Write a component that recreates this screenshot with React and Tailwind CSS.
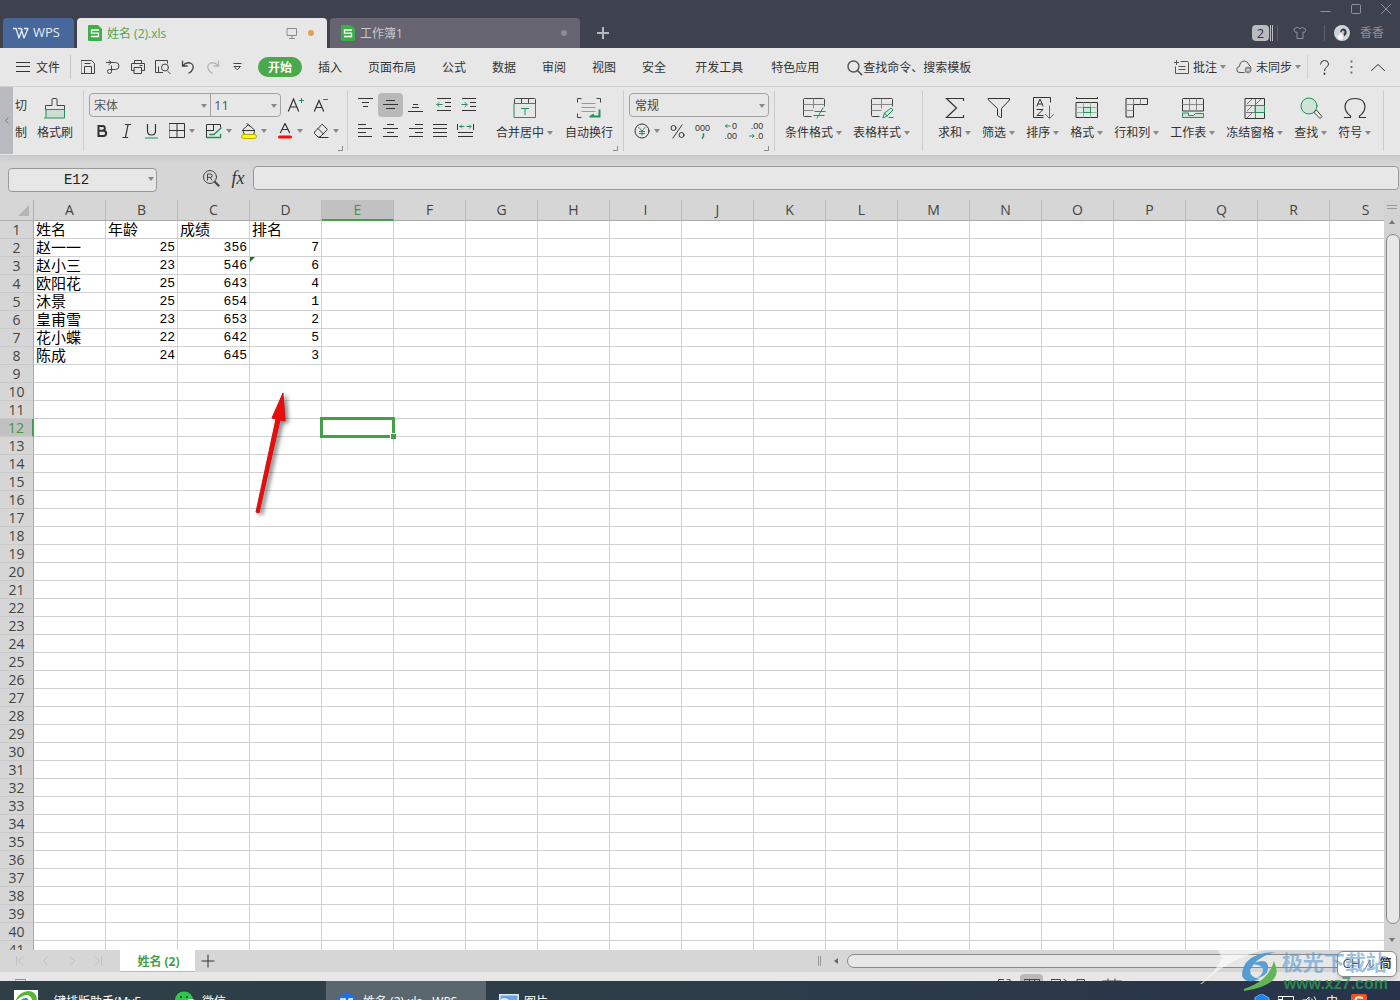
import { useState } from "react"

const columns = "ABCDEFGHIJKLMNOPQRS".split("")

const sheet = [
  ["姓名", "年龄", "成绩", "排名"],
  ["赵一一", 25, 356, 7],
  ["赵小三", 23, 546, 6],
  ["欧阳花", 25, 643, 4],
  ["沐景", 25, 654, 1],
  ["皇甫雪", 23, 653, 2],
  ["花小蝶", 22, 642, 5],
  ["陈成", 24, 645, 3],
]

const menuItems = ["插入", "页面布局", "公式", "数据", "审阅", "视图", "安全"]

const Svg = ({ w = 16, h = 16, className = "", children }) => (
  <svg
    width={w}
    height={h}
    viewBox={`0 0 ${w} ${h}`}
    fill="none"
    stroke="currentColor"
    strokeLinecap="square"
    className={`shrink-0 ${className}`}
    aria-hidden="true"
  >
    {children}
  </svg>
)

const GREEN = "#21935a"

const Caret = () => (
  <svg width="6" height="4" viewBox="0 0 6 4" className="shrink-0 text-[#888]" aria-hidden="true">
    <path d="M0 0h6L3 4z" fill="currentColor" />
  </svg>
)

const Separator = () => <div className="w-px self-stretch my-1 bg-[#cbcbcb] shrink-0" />

const Corner = ({ className = "right-1" }) => (
  <Svg w={5} h={5} className={`absolute bottom-1 ${className}`}>
    <path d="M4.500 0v4.500H0" stroke="#888" strokeLinecap="butt" />
  </Svg>
)

const IconButton = ({ label, active, children }) => (
  <button
    aria-label={label}
    className={`w-[25px] h-6 flex items-center justify-center rounded-sm ${active ? "bg-[#b9b9b9]" : ""}`}
  >
    {children}
  </button>
)

const DropIcon = ({ label, children }) => (
  <button aria-label={label} className="w-9 h-6 flex items-center justify-center gap-1">
    {children}
    <Caret />
  </button>
)

const BigButton = ({ label, drop = true, children }) => (
  <button className="flex flex-col items-center pt-[9px] shrink-0 whitespace-nowrap">
    <span className="h-6 flex items-center">{children}</span>
    <span className="mt-[5px] h-4 leading-4 flex items-center gap-[3px]">
      {label}
      {drop && <Caret />}
    </span>
  </button>
)

const SheetIcon = () => (
  <svg width="14" height="16" viewBox="0 0 14 16" className="shrink-0" aria-hidden="true">
    <path d="M1 0h9l4 4v11a1 1 0 0 1-1 1H1a1 1 0 0 1-1-1V1a1 1 0 0 1 1-1z" fill="#3fae49" />
    <path d="M11 5H3.500v3.200h7v3.300H3" fill="none" stroke="#fff" strokeWidth="1.300" />
  </svg>
)

const TitleBar = () => (
  <header className="h-12 shrink-0 bg-[#3e424f] flex items-end pl-[3px] text-xs">
    <button className="w-[71px] h-[30px] bg-[#48689b] rounded-t flex items-center gap-1 pl-[10px] text-[#e6ebf4] text-[13px]">
      <Svg w={16} h={13}>
        <path d="M.5 1.500H3l3 9.500L9 2.500M5.500 1.500H8l3 9.500 4-9.500h-3.500" strokeWidth="1.300" strokeLinejoin="round" />
      </Svg>
      WPS
    </button>
    <div className="ml-[3px] w-[250px] h-[30px] bg-[#e7e7e7] rounded-t flex items-center pl-[11px] pr-[13px] text-[#4da64f]">
      <SheetIcon />
      <span className="ml-[5px] pt-[2px]">姓名 (2).xls</span>
      <Svg w={12} h={12} className="ml-auto text-[#8c8c8c]">
        <path d="M1.500 1.500h9v7h-9zM6 9v2M3.500 11.500h5" />
      </Svg>
      <span className="ml-[10px] size-[6px] rounded-full bg-[#e2a052]" />
    </div>
    <div className="ml-[3px] w-[250px] h-[30px] bg-[#656470] rounded-t flex items-center pl-[11px] pr-[13px] text-[#c9c9cf]">
      <SheetIcon />
      <span className="ml-[5px] pt-[2px]">工作簿1</span>
      <span className="ml-auto size-[6px] rounded-full bg-[#8d8c97]" />
    </div>
    <button aria-label="新建标签" className="ml-[17px] mb-[9px]">
      <Svg w={12} h={12} className="text-[#b5b7bd]">
        <path d="M6 1v10M1 6h10" strokeWidth="2" />
      </Svg>
    </button>
    <div className="ml-auto self-stretch flex flex-col items-end text-[#8e9098]">
      <div className="h-[18px] flex items-center gap-[18px] pr-2">
        <button aria-label="最小化">
          <Svg w={12} h={12}><path d="M1 8.500h9" /></Svg>
        </button>
        <button aria-label="最大化">
          <Svg w={12} h={12}><rect x="1.500" y="1.500" width="9" height="9" rx="1" /></Svg>
        </button>
        <button aria-label="关闭">
          <Svg w={12} h={12}><path d="M1.500 1.500l9 9M10.500 1.500l-9 9" /></Svg>
        </button>
      </div>
      <div className="flex-1 flex items-center pr-4">
        <span className="w-[17px] h-4 leading-4 text-center bg-[#b9bbc1] text-[#33363f] rounded-sm text-[13px]">2</span>
        <Svg w={5} h={16}><path d="M1.500 0v16M3.500 0v16" stroke="#b9bbc1" /></Svg>
        <span className="ml-[3px] w-px h-4 bg-[#5d606c]" />
        <Svg w={14} h={14} className="ml-[15px]">
          <path d="M4.500 1.500q2.500 2.500 5 0l3.500 2-1.500 3-1.500-.5v6.500h-6V6l-1.500.5-1.500-3z" strokeLinejoin="round" />
        </Svg>
        <span className="ml-[17px] w-px h-4 bg-[#5d606c]" />
        <svg width="16" height="16" viewBox="0 0 16 16" className="ml-[9px]" aria-hidden="true">
          <circle cx="8" cy="8" r="8" fill="#cfd4da" />
          <path d="M6 7q1-4 4-3.500 3 1 2.500 5l-2 3-1.500-4z" fill="#3b3640" />
          <circle cx="9" cy="7" r="1.500" fill="#e3b8a4" />
          <path d="M3 11l5-3 1 6-4 1z" fill="#f4f5f7" />
        </svg>
        <span className="ml-[10px]">香香</span>
      </div>
    </div>
  </header>
)

const MenuBar = () => (
  <nav className="h-[39px] shrink-0 bg-[#e7e7e7] border-b border-[#d0d0d0] flex items-center text-xs text-[#333] whitespace-nowrap">
    <button className="ml-4 flex items-center gap-[6px]">
      <Svg w={14} h={10}><path d="M.5 .5h13M.5 4.500h13M.5 9.500h13" /></Svg>
      <span className="pt-[2px]">文件</span>
    </button>
    <div className="ml-[10px] w-px h-6 bg-[#c4c4c4]" />
    <div className="ml-1 flex text-[#444]">
      <IconButton label="保存">
        <Svg w={14} h={14}><path d="M.5.5h10l3 3v10H.5zM3.500 13V6.500h7V13M4 3.500h5" strokeLinejoin="round" /></Svg>
      </IconButton>
      <IconButton label="输出">
        <Svg w={14} h={14}><path d="M.5 2.500h9a3.500 3.500 0 0 1 0 7h-4M3 .5l2.500 2L3 4.500M5.500 6v5.500a2 2 0 1 1-2-2h2" /></Svg>
      </IconButton>
      <IconButton label="打印">
        <Svg w={14} h={14}><path d="M3.500 3.500v-3h7v3M3 10.500H.5v-7h13v7H11M3.500 7.500h7v6h-7zM9 5.500h2" strokeLinejoin="round" /></Svg>
      </IconButton>
      <IconButton label="打印预览">
        <Svg w={16} h={14}><path d="M12.500 3V.5H.5v12h7M13 11.500l2 2M3.500 12V7" /><circle cx="10" cy="7.500" r="3.500" /></Svg>
      </IconButton>
      <IconButton label="撤销">
        <Svg w={14} h={14}><path d="M1.500 1.500v4.500h4.500M2 5.500q3-3.500 7-2.500 4 1.500 3 5.500-1 3-4 4.500" strokeWidth="1.300" /></Svg>
      </IconButton>
      <IconButton label="重做">
        <Svg w={14} h={14} className="text-[#b5b5b5]"><path d="M12.500 1.500v4.500H8M12 5.500q-3-3.500-7-2.500-4 1.500-3 5.500 1 3 4 4.500" strokeWidth="1.300" /></Svg>
      </IconButton>
      <IconButton label="更多">
        <Svg w={9} h={8}><path d="M1 .5h7M1.500 3.500h6l-3 3z" /></Svg>
      </IconButton>
    </div>
    <button className="ml-2 w-11 h-5 pt-px rounded-full bg-[#4aa84d] text-white font-bold">开始</button>
    <div className="ml-4 pt-[2px] flex gap-[26px]">
      {menuItems.map((item) => (
        <button key={item}>{item}</button>
      ))}
    </div>
    <div className="ml-[29px] pt-[2px] flex gap-7">
      <button>开发工具</button>
      <button>特色应用</button>
      <button className="flex items-center">
        <Svg w={16} h={16} className="text-[#555]"><circle cx="6.500" cy="6.500" r="5.500" strokeWidth="1.400" /><path d="M10.500 10.500l4 4" strokeWidth="1.600" /></Svg>
        查找命令、搜索模板
      </button>
    </div>
    <div className="ml-auto flex items-center pr-[14px]">
      <button className="flex items-center">
        <Svg w={16} h={14} className="mr-[3px]"><path d="M7 1.500h6.500q1 0 1 1v11H1.500V7M2.500.5v4M.5 2.500h4M5 6.500h6M5 9.500h6" stroke="#555" /></Svg>
        <span className="pt-[2px]">批注</span>
        <span className="ml-[3px]"><Caret /></span>
      </button>
      <button className="ml-[10px] flex items-center">
        <Svg w={16} h={14} className="mr-[4px]">
          <path d="M8 12.500H4a3 3 0 0 1-.5-6Q4 1 8.500 1 12 1.500 13 5q2 1 2 3" stroke="#555" />
          <circle cx="12" cy="10" r="3" fill="#999" stroke="#888" />
          <path d="M11 10h2" stroke="#fff" />
        </Svg>
        <span className="pt-[2px]">未同步</span>
        <span className="ml-[3px]"><Caret /></span>
      </button>
      <div className="ml-[6px] w-px h-6 bg-[#cfcfcf]" />
      <button aria-label="帮助" className="ml-[11px]">
        <Svg w={11} h={15}><path d="M1.500 4q0-3.500 4-3.500t4 3.500q0 2-2 3.200-2 1-2 3.300" /><path d="M5.500 13.500v.5" strokeWidth="1.600" /></Svg>
      </button>
      <button aria-label="更多选项" className="ml-[20px]">
        <Svg w={3} h={14} className="text-[#666]"><path d="M1.500 1.500v.1M1.500 7v.1M1.500 12.500v.1" strokeWidth="1.800" /></Svg>
      </button>
      <button aria-label="折叠功能区" className="ml-[17px]">
        <Svg w={16} h={9}><path d="M1.500 7.500 8 1.500l6.500 6" /></Svg>
      </button>
    </div>
  </nav>
)

const AlignLines = ({ d }) => (
  <Svg w={15} h={14}>
    <path d={d} stroke="#333" strokeLinecap="butt" />
  </Svg>
)

const FontGroup = () => (
  <div className="relative pl-[5px] pr-[3px] pt-[6px] flex flex-col gap-[2px] shrink-0">
    <div className="flex">
      <div className="w-[192px] h-6 border border-[#a3a3a3] rounded flex">
        <div className="relative w-[121px] border-r border-[#a3a3a3] flex items-center">
          <select aria-label="字体" className="appearance-none w-full pl-1 pt-px text-[#555] outline-none">
            <option>宋体</option>
          </select>
          <span className="absolute right-[3px] top-[10px] pointer-events-none"><Caret /></span>
        </div>
        <div className="relative flex-1 flex items-center">
          <select aria-label="字号" className="appearance-none w-full pl-[3px] pt-px text-[13px] text-[#555] outline-none">
            <option>11</option>
          </select>
          <span className="absolute right-[3px] top-[10px] pointer-events-none"><Caret /></span>
        </div>
      </div>
      <div className="ml-[2px] flex">
        <IconButton label="增大字号">
          <Svg w={17} h={16}><path d="M1.500 14 6.500 2l5 12M3.500 10h6" strokeWidth="1.200" /><path d="M14.500 1v5M12 3.500h5" stroke={GREEN} strokeLinecap="butt" /></Svg>
        </IconButton>
        <IconButton label="减小字号">
          <Svg w={17} h={16}><path d="M2.500 14 7 3.500l4.500 10.500M4 10.500h6" strokeWidth="1.200" /><path d="M11 2.500h5" stroke={GREEN} strokeLinecap="butt" /></Svg>
        </IconButton>
      </div>
    </div>
    <div className="flex">
      <IconButton label="加粗">
        <Svg w={12} h={14}><path d="M2.500 2h4a2.300 2.300 0 0 1 0 4.700h-4zM2.500 6.700h5a2.600 2.600 0 0 1 0 5.300h-5z" strokeWidth="2" /></Svg>
      </IconButton>
      <IconButton label="倾斜">
        <Svg w={10} h={15}><path d="M3.500.5h5M1 13.500h4.500M6 1 3.500 13" strokeWidth="1.200" /></Svg>
      </IconButton>
      <IconButton label="下划线">
        <Svg w={13} h={15}><path d="M2.500.5v6.500q0 4 4 4t4-4V.5" strokeWidth="1.200" /><path d="M.5 14h12" stroke={GREEN} /></Svg>
      </IconButton>
      <DropIcon label="边框">
        <Svg><path d="M.5.5h15v14H.5zM8 .5v14M.5 7.500h15" /></Svg>
      </DropIcon>
      <DropIcon label="绘图边框">
        <Svg w={17} h={16}><path d="M15.500 4V1.500h-14V14M8.500 1.500v6M1.500 7.500h6" /><path d="M1.500 14.500h14v-3M5 11.500h4l7-6.500" stroke={GREEN} strokeWidth="1.400" /></Svg>
      </DropIcon>
      <DropIcon label="填充颜色">
        <Svg><path d="M3 10.500 1.500 7l6-5.500 6 5.500-.5 3.500M6 .5l3 3M2 7.500h11" /><rect x=".5" y="11.500" width="15" height="4" rx="2" fill="#ff0" stroke="#b5a800" /></Svg>
      </DropIcon>
      <DropIcon label="字体颜色">
        <Svg><path d="M3.500 9.500 8 .5l4.500 9M5 6.500h6" strokeWidth="1.200" /><path d="M2.500 14h11" stroke="#e11" strokeWidth="3" strokeLinecap="round" /></Svg>
      </DropIcon>
      <DropIcon label="清除">
        <Svg><path d="M9.500 1.500 14.500 6.500 7 14H5L1.500 10.500V9.500zM5 5.500l5.500 5.500M6 14.500h9" /></Svg>
      </DropIcon>
    </div>
    <Corner />
  </div>
)

const AlignGroup = () => (
  <div className="relative pl-[5px] pr-[10px] flex shrink-0">
    <div className="pt-[6px] flex flex-col gap-[2px] w-[128px]">
      <div className="flex">
        <IconButton label="顶端对齐"><AlignLines d="M0 .5h15M4 4.500h7M5 8.500h5" /></IconButton>
        <IconButton label="垂直居中" active><AlignLines d="M3 2.500h9M0 6.500h15M3 10.500h9" /></IconButton>
        <IconButton label="底端对齐"><AlignLines d="M5 6.500h5M4 9.500h7M0 13.500h15" /></IconButton>
        <div className="ml-[3px] flex">
          <IconButton label="减少缩进">
            <Svg w={15} h={14}><path d="M1 .5h14M9 4.500h6M9 8.500h6M1 12.500h14" stroke="#333" strokeLinecap="butt" /><path d="M1 6.500h5M3 4.500l-2 2 2 2" stroke={GREEN} /></Svg>
          </IconButton>
          <IconButton label="增加缩进">
            <Svg w={15} h={14}><path d="M1 .5h14M9 4.500h6M9 8.500h6M1 12.500h14" stroke="#333" strokeLinecap="butt" /><path d="M1 6.500h5M4 4.500l2 2-2 2" stroke={GREEN} /></Svg>
          </IconButton>
        </div>
      </div>
      <div className="flex">
        <IconButton label="左对齐"><AlignLines d="M0 .5h8M0 4.500h14M0 8.500h8M0 12.500h14" /></IconButton>
        <IconButton label="居中"><AlignLines d="M4 .5h7M0 4.500h15M4 8.500h7M0 12.500h15" /></IconButton>
        <IconButton label="右对齐"><AlignLines d="M7 .5h8M1 4.500h14M7 8.500h8M1 12.500h14" /></IconButton>
        <IconButton label="两端对齐"><AlignLines d="M0 .5h14M0 4.500h14M0 8.500h14M0 12.500h14" /></IconButton>
        <IconButton label="分散对齐">
          <Svg w={17} h={14}><path d="M.5 0v6M16.500 0v6M1 8.500h15M1 12.500h15" stroke="#333" strokeLinecap="butt" /><path d="M3 2.500h4M10 2.500h4M4.500 1l-1.500 1.500 1.500 1.500M12.500 1l1.500 1.500-1.500 1.500" stroke={GREEN} /></Svg>
        </IconButton>
      </div>
    </div>
    <div className="ml-[15px] flex gap-3">
      <BigButton label="合并居中">
        <Svg w={24} h={22}><path d="M1.500 6.500v-4q0-1 1-1h19q1 0 1 1v4M8.500 1.500v5M15.500 1.500v5" stroke="#444" /><path d="M1.500 6.500h21v14h-21zM8.500 11.500h7M12 11.500v6" stroke={GREEN} /></Svg>
      </BigButton>
      <BigButton label="自动换行" drop={false}>
        <Svg w={26} h={22}>
          <path d="M1.500 5V1.500H5M21 1.500h3.500V5M1.500 17v3.500H5" stroke="#444" />
          <path d="M6 6.500h13M6 10.500h13M6 14.500h13" stroke="#999" />
          <path d="M23.500 13.500v6H16M17 18l-2.500 1.500" stroke={GREEN} strokeWidth="2" />
        </Svg>
      </BigButton>
    </div>
    <Corner className="right-[5px]" />
  </div>
)

const NumberGroup = () => (
  <div className="relative pl-[5px] pr-[5px] pt-[6px] flex flex-col gap-[2px] shrink-0">
    <div className="relative w-[140px] h-6 border border-[#a3a3a3] rounded flex items-center">
      <select aria-label="数字格式" className="appearance-none w-full pl-[5px] pt-px text-[#444] outline-none">
        <option>常规</option>
      </select>
      <span className="absolute right-[3px] top-[10px] pointer-events-none"><Caret /></span>
    </div>
    <div className="flex font-['Liberation_Sans',sans-serif]">
      <DropIcon label="货币">
        <Svg><circle cx="8" cy="8" r="7" /><path d="M5 4.500 8 8l3-3.500M8 8v4M5.500 8.500h5M5.500 10.500h5" stroke={GREEN} /></Svg>
      </DropIcon>
      <IconButton label="百分比">
        <Svg w={15} h={15}><circle cx="3.500" cy="4" r="2.500" /><circle cx="11.500" cy="11" r="2.500" /><path d="M12 1 3 14" /></Svg>
      </IconButton>
      <IconButton label="千位分隔">
        <span className="flex flex-col items-center text-[9px] leading-[10px]">
          000
          <Svg w={4} h={6}><path d="M2.500 1v2l-1 2" stroke={GREEN} strokeWidth="1.600" /></Svg>
        </span>
      </IconButton>
      <div className="ml-[3px] flex">
        <IconButton label="增加小数位">
          <span className="flex flex-col items-end text-[9px] leading-[10px]">
            <span className="flex items-center"><Svg w={8} h={6}><path d="M1.500 3H6M3 1.500 1.500 3 3 4.500" stroke={GREEN} /></Svg>0</span>
            <span>.00</span>
          </span>
        </IconButton>
        <IconButton label="减少小数位">
          <span className="flex flex-col items-end text-[9px] leading-[10px]">
            <span>.00</span>
            <span className="flex items-center"><Svg w={8} h={6}><path d="M1.500 3H6M4.500 1.500 6 3 4.500 4.500" stroke={GREEN} /></Svg>.0</span>
          </span>
        </IconButton>
      </div>
    </div>
    <Corner className="right-[5px]" />
  </div>
)

const Ribbon = () => (
  <div className="h-[69px] shrink-0 bg-[#e7e7e7] border-b border-[#c6c6c6] flex text-xs text-[#333] overflow-hidden">
    <button aria-label="向左滚动" className="w-[13px] bg-[#b9bac0] mb-px flex items-center justify-center shrink-0">
      <Svg w={5} h={7}><path d="M4 1 1.500 3.500 4 6" stroke="#777" /></Svg>
    </button>
    <div className="flex pl-[2px] pr-[10px] shrink-0">
      <div className="flex flex-col pt-[11px] gap-[11px]">
        <button className="leading-4">切</button>
        <button className="leading-4">制</button>
      </div>
      <div className="ml-[10px] flex">
        <BigButton label="格式刷" drop={false}>
          <Svg w={22} h={22}>
            <rect x="1.500" y="13" width="19" height="8" fill="#cfdcd4" stroke="none" />
            <path d="M1.500 12.500v-4h6.500V2.500q0-1 1-1h3q1 0 1 1v6h7.500v4" stroke="#444" />
            <path d="M1.500 12.500h19v8.500H.5M2 13v7" stroke={GREEN} />
          </Svg>
        </BigButton>
      </div>
    </div>
    <Separator />
    <FontGroup />
    <Separator />
    <AlignGroup />
    <Separator />
    <NumberGroup />
    <Separator />
    <div className="flex gap-[11px] pl-[10px] pr-3 shrink-0">
      <BigButton label="条件格式">
        <Svg w={24} h={22}><path d="M9 19.500H2.500q-1 0-1-1v-16q0-1 1-1h19q1 0 1 1V9" stroke="#444" /><path d="M2 7.500h20M2 13.500h9M11.500 2v9" stroke="#888" /><path d="M13 14.500h10M12 18.500h10M21 11l-6 10" stroke={GREEN} /></Svg>
      </BigButton>
      <BigButton label="表格样式">
        <Svg w={24} h={22}><path d="M9 19.500H2.500q-1 0-1-1v-16q0-1 1-1h19q1 0 1 1V9" stroke="#444" /><path d="M2 7.500h20M2 13.500h9M11.500 2v9" stroke="#888" /><path d="M13 20.500l1.500-4.500 6.500-5 2 2-6 6zM14.500 16l2.500 3M19 20.500h4" fill="#d3e5da" stroke={GREEN} /></Svg>
      </BigButton>
    </div>
    <Separator />
    <div className="flex gap-[11px] pl-[15px] pr-3 shrink-0">
      <BigButton label="求和">
        <Svg w={20} h={22}><path d="M18.500 3.500v-2h-17L11.500 11l-10 9.500h17v-2" strokeWidth="1.200" /></Svg>
      </BigButton>
      <BigButton label="筛选">
        <Svg w={24} h={22}><path d="M1.500 1.500h21V3L14.500 11.500v9h-1l-3-2v-7L1.500 3z" strokeLinejoin="round" /></Svg>
      </BigButton>
      <BigButton label="排序">
        <Svg w={22} h={23}><path d="M11 20.500H1.500V.5h17V5M5 9l3-7 3 7M6 7h4M5 12.500h6l-6 6h6" /><path d="M17.500 9v12M13.500 17.500l4 4 4-4" stroke={GREEN} /></Svg>
      </BigButton>
      <BigButton label="格式">
        <Svg w={24} h={22}><path d="M1.500 0v1M22.500 0v1M1.500 1.500h21M1.500 5.500h21v15h-21z" stroke="#333" /><path d="M2 10.500h20M2 15.500h20M8.500 6v14M15.500 6v14" stroke="#8fb7a1" /><rect x="8.500" y="10.500" width="7" height="5" fill="#d3e5da" stroke={GREEN} /></Svg>
      </BigButton>
      <BigButton label="行和列">
        <Svg w={24} h={22}><path d="M1.500 1.500h21v6H8.500v12.500h-7z" stroke="#333" /><path d="M8.500 2v5M15.500 2v5M2 7.500h6M2 13.500h6" stroke="#888" /></Svg>
      </BigButton>
      <BigButton label="工作表">
        <Svg w={24} h={22}><path d="M1.500 13.500v-11q0-1 1-1h19q1 0 1 1v11z" stroke="#333" /><path d="M8.500 2v11M15.500 2v11M2 7.500h20" stroke="#888" /><path d="M1.500 16.500v4h21v-4h-8l-2 2h-5v-2z" fill="#cfe3d6" stroke={GREEN} /></Svg>
      </BigButton>
      <BigButton label="冻结窗格">
        <Svg w={22} h={23}><rect x="12" y="9" width="9" height="6" fill="#cfe3d6" stroke="none" /><path d="M1.500 1.500h19v20h-19z" stroke="#333" /><path d="M11.500 2v19M2 15.500h18M2 8.500h9M3 7l5-5M12 7l5-5M3 14l5-5M3 21l5-5" stroke="#777" strokeLinecap="butt" /><path d="M11.500 8.500h9v7h-9z" stroke={GREEN} /></Svg>
      </BigButton>
      <BigButton label="查找">
        <Svg w={24} h={22}><circle cx="10" cy="9" r="8" fill="#cfe3d6" stroke={GREEN} /><path d="M16 14l1.500-1 5.500 6.500-2 2L15.500 16z" stroke="#444" /></Svg>
      </BigButton>
      <BigButton label="符号">
        <Svg w={24} h={22}><path d="M1.500 20.500h6v-1.500Q2 15 2 9.500 2.500 1.500 12 1.500t10 8q0 5.500-5.500 9.500v1.500h6" stroke="#333" strokeWidth="1.200" /></Svg>
      </BigButton>
    </div>
    <Separator />
  </div>
)

const FormulaBar = () => (
  <div className="h-11 shrink-0 bg-[#d6d6d6] bg-linear-to-b from-[#cdcdcd] to-[#d6d6d6] to-20% flex items-center pl-2 pr-px pb-[2px] pt-px">
    <div className="relative w-[149px] h-6">
      <input
        aria-label="名称框"
        defaultValue="E12"
        className="w-full h-full bg-[#e7e7e7] border border-[#999] rounded text-center pr-3 text-sm text-[#222] font-['Liberation_Mono','Noto_Sans_CJK_SC',monospace] outline-none"
      />
      <span className="absolute right-[3px] top-[11px] pointer-events-none"><Caret /></span>
    </div>
    <button aria-label="查找公式" className="ml-[45px]">
      <Svg w={18} h={18} className="text-[#444]">
        <circle cx="8" cy="8" r="6.500" />
        <path d="M5.500 11V5h3a1.700 1.700 0 0 1 0 3.400h-3M8 8.500 10 11" />
        <path d="M13 13l3.500 3.500" strokeWidth="2" />
      </Svg>
    </button>
    <button aria-label="插入函数" className="ml-2 w-[20px] text-lg leading-5 italic text-[#333] font-['Liberation_Serif',serif]">fx</button>
    <input
      aria-label="编辑栏"
      className="ml-[5px] flex-1 min-w-0 h-6 bg-[#e7e7e7] border border-[#999] rounded px-2 text-[13px] outline-none"
    />
  </div>
)

const Grid = () => {
  const [selected, setSelected] = useState({ row: 12, col: "E" })

  return (
    <div className="relative flex-1 min-w-0 overflow-hidden bg-white">
      <table className="table-fixed w-[1402px] border-separate border-spacing-0">
        <thead>
          <tr className="bg-[#d6d6d6] text-sm text-[#444]">
            <th className="relative w-[34px] h-[21px] p-0 border-b border-r border-[#b0b0b0]">
              <Svg w={11} h={11} className="absolute right-1 bottom-1">
                <path d="M11 0v11H0z" fill="#b4b4b4" stroke="none" />
              </Svg>
            </th>
            {columns.map((col) => (
              <th
                key={col}
                className={`w-[72px] h-[21px] p-0 leading-[18px] font-normal ${
                  col === selected.col
                    ? "bg-[#c1c1c1] text-[#3c9a3f] border-b-2 border-r border-b-[#43a047] border-r-[#b8b8b8]"
                    : "border-b border-r border-b-[#a8a8a8] border-r-[#b8b8b8]"
                }`}
              >
                {col}
              </th>
            ))}
          </tr>
        </thead>
        <tbody>
          {Array.from({ length: 41 }, (_, i) => i + 1).map((row) => (
            <tr key={row}>
              <th
                className={`h-[18px] p-0 text-sm leading-[17px] font-normal border-b border-b-[#c9c9c9] ${
                  row === selected.row
                    ? "bg-[#c1c1c1] text-[#3c9a3f] border-r-2 border-r-[#43a047]"
                    : "bg-[#d6d6d6] text-[#444] border-r border-r-[#a8a8a8]"
                }`}
              >
                {row}
              </th>
              {columns.map((col, c) => {
                const value = sheet[row - 1]?.[c]
                const isNumber = typeof value === "number"
                return (
                  <td
                    key={col}
                    onClick={() => setSelected({ row, col })}
                    className={`relative h-[18px] p-0 border-r border-b border-[#d0d0d0] text-black whitespace-nowrap ${
                      isNumber
                        ? "pt-px pr-[2px] text-right text-[13px] leading-4 font-['Liberation_Mono',monospace]"
                        : "pl-[2px] text-[15px] leading-[17px]"
                    }`}
                  >
                    {value}
                    {row === 3 && col === "D" && (
                      <Svg w={5} h={5} className="absolute left-0 top-0">
                        <path d="M0 0h5L0 5z" fill="#1b7a1f" stroke="none" />
                      </Svg>
                    )}
                    {row === selected.row && col === selected.col && (
                      <div className="absolute -left-0.5 -top-0.5 -right-0.5 -bottom-0.5 border-[3px] border-[#43a047] z-10">
                        <span className="absolute -right-1 -bottom-1 size-[6px] bg-[#43a047] border-l border-t border-white" />
                      </div>
                    )}
                  </td>
                )
              })}
            </tr>
          ))}
        </tbody>
      </table>
      {/* hand-drawn pointer lying over the cells */}
      <svg width="50" height="136" viewBox="0 0 50 136" className="absolute left-[247px] top-[187px] pointer-events-none drop-shadow-[3px_2px_2px_rgba(0,0,0,0.5)]" aria-hidden="true">
        <path d="M9 125 29 32l-4-1L36 6l2 28-5-1L12 126z" fill="#ea0c0c" stroke="#d01010" />
      </svg>
    </div>
  )
}

const VerticalScroll = () => (
  <div className="w-4 shrink-0 bg-[#d2d2d2] flex flex-col items-center">
    <Svg w={10} h={12}><path d="M.5 5.500h9M.5 8.500h9" stroke="#999" /></Svg>
    <Svg w={6} h={4} className="mt-2"><path d="M0 4h6L3 0z" fill="#777" stroke="none" /></Svg>
    <div className="mt-[10px] w-[14px] flex-1 ml-[2px] rounded-full border border-[#8a8a8a] bg-[#e7e7e7]" />
    <Svg w={6} h={4} className="mt-[14px] mb-2"><path d="M0 0h6L3 4z" fill="#777" stroke="none" /></Svg>
  </div>
)

const SheetTabs = () => (
  <div className="h-[22px] shrink-0 bg-[#d6d6d6] flex items-center text-xs">
    <div className="w-[120px] flex items-center gap-4 pl-[15px] text-[#bdbdbd]">
      <button aria-label="第一个"><Svg w={10} h={10}><path d="M1.500 1v8M7.500 1l-4 4 4 4" /></Svg></button>
      <button aria-label="上一个"><Svg w={10} h={10}><path d="M6.500 1l-4 4 4 4" /></Svg></button>
      <button aria-label="下一个"><Svg w={10} h={10}><path d="M3.500 1l4 4-4 4" /></Svg></button>
      <button aria-label="最后一个"><Svg w={10} h={10}><path d="M8.500 1v8M2.500 1l4 4-4 4" /></Svg></button>
    </div>
    <button className="w-[75px] h-full pt-[2px] pl-[2px] bg-white text-[#43a047] font-bold text-center border-b border-[#bbb]">姓名 (2)</button>
    <button aria-label="新建工作表" className="ml-[6px]">
      <Svg w={14} h={14}><path d="M7 1v12M1 7h12" stroke="#333" /></Svg>
    </button>
    <div className="ml-auto w-[582px] flex items-center pr-[17px]">
      <Svg w={4} h={10}><path d="M.5 0v10M2.500 0v10" stroke="#999" /></Svg>
      <Svg w={4} h={6} className="ml-3"><path d="M4 0v6L0 3z" fill="#666" stroke="none" /></Svg>
      <div className="ml-[9px] flex-1 h-[14px] rounded-full border border-[#8a8a8a] bg-[#e7e7e7]" />
    </div>
  </div>
)

const StatusBar = () => (
  <div className="h-[9px] shrink-0 bg-[#e7e7e7] overflow-hidden flex items-start justify-between">
    <div className="pl-[15px] pt-[7px]">
      <Svg w={11} h={11} className="text-[#7c9c8c]"><path d="M.5 .5h10v10H.5zM3 3h5" /></Svg>
    </div>
    <div className="flex items-start gap-2 pr-[276px] text-[#444]">
      <Svg w={14} h={20} className="mt-[6px]"><path d="M.5 12V1.500h5" /><path d="M9 1.500h3v4M12 2 8 6" stroke={GREEN} /></Svg>
      <span className="w-[23px] h-5 mt-[2px] rounded-sm bg-[#b9b9b9] flex justify-center pt-1">
        <Svg w={16} h={14}><path d="M.5 1.500h15v12H.5zM5.500 2v11M10.500 2v11" /></Svg>
      </span>
      <Svg w={17} h={14} className="mt-[6px]"><path d="M.5 1.500h9v10h-9zM13 1.500l2 1v10" /></Svg>
      <Svg w={10} h={14} className="mt-[6px]"><path d="M1.500 1.500h7v10h-7z" /></Svg>
      <Svg w={22} h={14} className="mt-[6px] ml-2"><path d="M1 3h18M6 1v3M13 1v3" /></Svg>
    </div>
  </div>
)

const TaskBar = () => (
  <footer className="h-[19px] shrink-0 overflow-hidden bg-linear-to-r from-[#2e3f46] via-[#2d3d49] to-[#27334a] text-xs text-white whitespace-nowrap">
    <div className="h-[42px] flex items-center">
      <button className="w-[160px] h-full flex items-center pl-[14px] gap-1">
        <svg width="24" height="24" viewBox="0 0 24 24" className="shrink-0" aria-hidden="true">
          <path d="M0 0h24v24H0z" fill="#fff" />
          <path d="M1 12Q4 2 14 1q8 0 9 8l-5 10Q20 6 13 5 6 6 1 12z" fill="#5cb531" />
          <path d="M3 16Q7 7 13 8q4 3-1 14z" fill="#2c8fd6" />
        </svg>
        一键排版助手(MyE...
      </button>
      <button className="w-[166px] h-full flex items-center pl-[14px] gap-1">
        <svg width="24" height="22" viewBox="0 0 24 22" className="shrink-0" aria-hidden="true">
          <ellipse cx="10" cy="9" rx="9" ry="8.500" fill="#2dc84d" />
          <ellipse cx="17" cy="14" rx="7" ry="6" fill="#e8eee9" />
          <circle cx="7" cy="6" r="1.200" fill="#16632a" />
          <circle cx="13" cy="6" r="1.200" fill="#16632a" />
        </svg>
        微信
      </button>
      <button className="w-[160px] h-full flex items-center pl-[11px] gap-[6px] bg-[#5a676e]">
        <svg width="20" height="20" viewBox="0 0 20 20" className="shrink-0" aria-hidden="true">
          <path d="M10 0l9 5v10l-9 5-9-5V5z" fill="#1f6fe5" />
          <path d="M4 14V7h4v3H4M16 7h-4v6h4" fill="none" stroke="#fff" strokeWidth="1.500" />
        </svg>
        姓名 (2).xls - WPS...
      </button>
      <button className="h-full flex items-center pl-[13px] gap-[5px]">
        <svg width="20" height="16" viewBox="0 0 20 16" className="shrink-0" aria-hidden="true">
          <path d="M0 0h20v16H0z" fill="#dfe9f2" />
          <path d="M1.500 1.500h17v13h-17z" fill="#6aa5e8" />
          <path d="M2 5q5-3 9 2t8 0v7H2z" fill="#d8ebfa" />
        </svg>
        图片
      </button>
      <div className="ml-auto flex items-center pr-[33px]">
        <Svg w={8} h={8}><path d="M1 5.500 4 2.500l3 3" /></Svg>
        <Svg w={16} h={16} className="ml-3"><path d="M8 0l7 4v8l-7 4-7-4V4z" fill="#1684fb" stroke="#6cb4ff" /></Svg>
        <Svg w={16} h={12} className="ml-2"><path d="M.5.5h15v10H.5zM.5 3.500h3M4.500.5v5" /></Svg>
        <Svg w={16} h={14} className="ml-2"><path d="M1 5h3l3-3v10L4 9H1zM10 4q2 3 0 6M12.500 2q3 5 0 10" /></Svg>
        <span className="ml-2 w-3">中</span>
        <svg width="16" height="16" viewBox="0 0 16 16" className="ml-[13px]" aria-hidden="true">
          <path d="M2 0h12q2 0 2 2v12q0 2-2 2H2q-2 0-2-2V2q0-2 2-2z" fill="#f4511e" />
          <path d="M12 4Q5 2 4.500 5.500 5 7.500 9 8q3 1 2 3-2 2-7 1" fill="none" stroke="#fff" strokeWidth="2" />
        </svg>
      </div>
    </div>
  </footer>
)

const InputIndicator = () => (
  <div className="absolute right-[3px] bottom-[23px] w-[60px] h-[26px] bg-white rounded-md border border-[#888] shadow-md flex items-center justify-center gap-1 text-xs text-[#333]">
    <span className="text-[13px] text-[#555]">CH</span>
    <Svg w={11} h={12}><path d="M1 11 6 2v8l4-3" stroke="#777" /></Svg>
    <span className="font-bold">简</span>
  </div>
)

const Watermark = () => (
  <div className="absolute right-[12px] bottom-0 h-[50px] flex pointer-events-none">
    <svg width="82" height="50" viewBox="0 0 82 50" aria-hidden="true">
      <path d="M0 34Q16 22 22 8L18 0h46Q26 10 2 34z" fill="#fff" opacity=".6" />
      <path d="M42 26Q42 3 76 2 56 7 50 20q0 8 10 9-14 6-18-3z" fill="#4795cf" opacity=".9" />
      <path d="M52 14q17-8 16 5-1 8-12 9 7-3 7-8t-11-6z" fill="#5b9fd8" />
      <path d="M74 14q9 20-30 26 24-8 30-26z" fill="#63b557" stroke="#63b557" strokeWidth="2" />
    </svg>
    <div className="flex flex-col whitespace-nowrap">
      <span className="text-[21px] leading-[24px] font-bold text-[#5b97cf]/60">极光下载站</span>
      <span className="pl-[2px] text-base leading-[20px] font-bold text-[#2f9a55]/80 font-['Liberation_Sans',sans-serif]">www.xz7.com</span>
    </div>
  </div>
)

const App = () => {
  return (
    <div className="relative h-screen flex flex-col overflow-hidden bg-[#d6d6d6] font-['Open_Sans','Noto_Sans_CJK_SC',sans-serif]">
      <TitleBar />
      <MenuBar />
      <Ribbon />
      <FormulaBar />
      <main className="flex-1 min-h-0 flex">
        <Grid />
        <VerticalScroll />
      </main>
      <SheetTabs />
      <StatusBar />
      <TaskBar />
      <InputIndicator />
      <Watermark />
    </div>
  )
}

export default App
